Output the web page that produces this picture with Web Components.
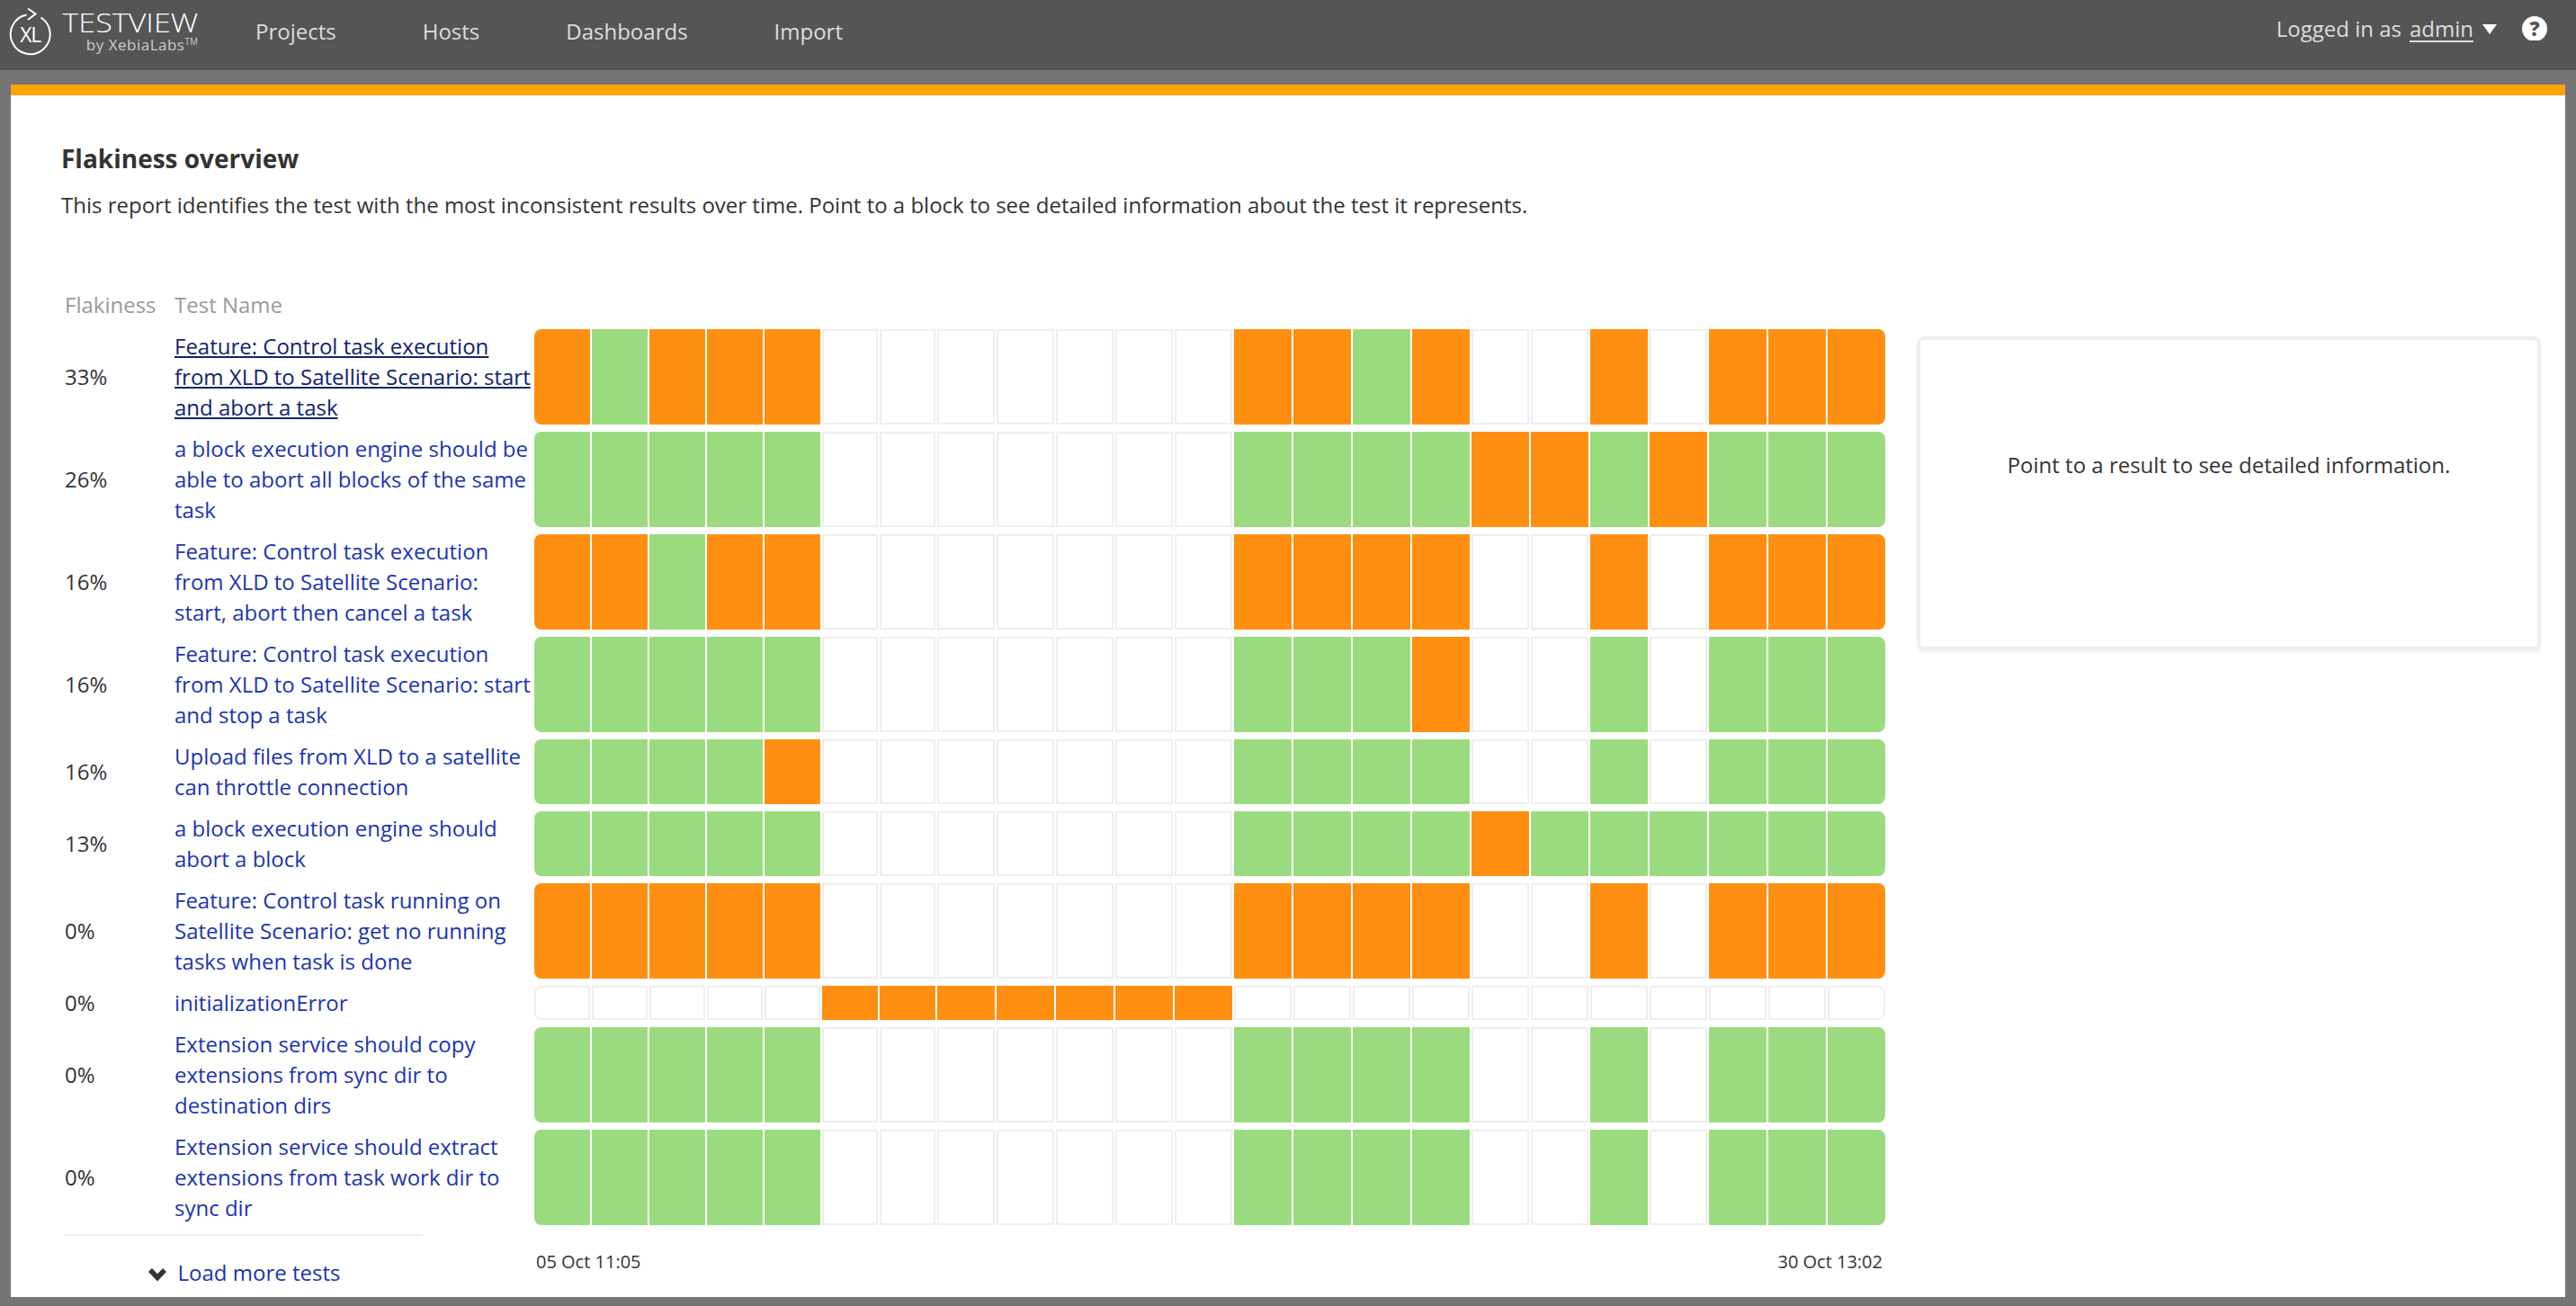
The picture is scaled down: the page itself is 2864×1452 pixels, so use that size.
<!DOCTYPE html>
<html>
<head>
<meta charset="utf-8">
<title>Flakiness overview</title>
<style>
    html, body { margin: 0; padding: 0; }
    body {
        width: 2864px;
        height: 1452px;
        overflow: hidden;
        background: #757575;
        font-family: "Open Sans", "Liberation Sans", sans-serif;
        color: #333;
    }
</style>
</head>
<body>
<app-header></app-header>
<report-page>
    <flaky-table>
        <flaky-row pct="33%" cells="ogooo.......oogo..o.ooo" hover>Feature: Control task execution from XLD to Satellite Scenario: start and abort a task</flaky-row>
        <flaky-row pct="26%" cells="ggggg.......ggggoogoggg">a block execution engine should be able to abort all blocks of the same task</flaky-row>
        <flaky-row pct="16%" cells="oogoo.......oooo..o.ooo">Feature: Control task execution from XLD to Satellite Scenario: start, abort then cancel a task</flaky-row>
        <flaky-row pct="16%" cells="ggggg.......gggo..g.ggg">Feature: Control task execution from XLD to Satellite Scenario: start and stop a task</flaky-row>
        <flaky-row pct="16%" cells="ggggo.......gggg..g.ggg">Upload files from XLD to a satellite can throttle connection</flaky-row>
        <flaky-row pct="13%" cells="ggggg.......ggggogggggg">a block execution engine should abort a block</flaky-row>
        <flaky-row pct="0%" cells="ooooo.......oooo..o.ooo">Feature: Control task running on Satellite Scenario: get no running tasks when task is done</flaky-row>
        <flaky-row pct="0%" cells=".....ooooooo...........">initializationError</flaky-row>
        <flaky-row pct="0%" cells="ggggg.......gggg..g.ggg">Extension service should copy extensions from sync dir to destination dirs</flaky-row>
        <flaky-row pct="0%" cells="ggggg.......gggg..g.ggg">Extension service should extract extensions from task work dir to sync dir</flaky-row>
    </flaky-table>
    <detail-panel slot="side">Point to a result to see detailed information.</detail-panel>
</report-page>

<script>
class AppHeader extends HTMLElement {
    constructor() {
        super();
        this.attachShadow({ mode: "open" });
    }

    connectedCallback() {
        this.shadowRoot.innerHTML = `
            <style>
                :host {
                    display: flex;
                    align-items: center;
                    height: 78px;
                    background: #555;
                    color: #ddd;
                    font-size: 24px;
                }
                svg { display: block; flex: none; }
                .brand {
                    width: 148px;
                    display: flex;
                    flex-direction: column;
                    align-items: flex-end;
                }
                .name {
                    color: #fff;
                    font-size: 29px;
                    font-weight: 300;
                    line-height: 30px;
                    margin-top: -9px;
                    transform: scaleX(1.176);
                    transform-origin: right center;
                }
                .by {
                    font-size: 17px;
                    line-height: 20px;
                    letter-spacing: .5px;
                    color: #ccc;
                }
                .by sup { font-size: 10px; line-height: 0; vertical-align: 6px; letter-spacing: 0; }
                nav {
                    display: flex;
                    gap: 96px;
                    margin-left: 64px;
                    margin-bottom: 10px;
                }
                .user {
                    display: flex;
                    align-items: center;
                    margin-left: auto;
                    margin-right: 32px;
                    margin-bottom: 15px;
                }
                .user u { margin-left: 9px; text-underline-offset: 4px; }
                .caret {
                    width: 0;
                    height: 0;
                    margin: 2px 28px 0 10px;
                    border-left: 8px solid transparent;
                    border-right: 8px solid transparent;
                    border-top: 11px solid #fff;
                }
                .help { display: grid; width: 28px; height: 27px; }
                .help > * { grid-area: 1 / 1; }
                .help span {
                    color: #555;
                    font-size: 22px;
                    font-weight: 800;
                    line-height: 27px;
                    text-align: center;
                }
            </style>
            <svg width="72" height="78" viewBox="0 0 72 78">
                <path d="M45.5 19.5 A22 22 0 1 1 29.5 16.5" fill="none" stroke="#fff" stroke-width="2"/>
                <path d="M31 9.5 L39.5 15.5 L31 22" fill="none" stroke="#fff" stroke-width="2"/>
                <text x="33.5" y="47" text-anchor="middle" fill="#fff" font-size="23" letter-spacing="-1.5" font-family="Open Sans">XL</text>
            </svg>
            <div class="brand">
                <div class="name">TESTVIEW</div>
                <div class="by">by XebiaLabs<sup>TM</sup></div>
            </div>
            <nav>
                <span>Projects</span>
                <span>Hosts</span>
                <span>Dashboards</span>
                <span>Import</span>
            </nav>
            <div class="user">
                <span>Logged in as</span><u>admin</u>
                <div class="caret"></div>
                <div class="help">
                    <svg width="28" height="27" viewBox="0 0 28 27"><circle cx="14" cy="14" r="14" fill="#fff"/></svg>
                    <span>?</span>
                </div>
            </div>
        `;
    }
}

class ReportPage extends HTMLElement {
    constructor() {
        super();
        this.attachShadow({ mode: "open" });
    }

    connectedCallback() {
        this.shadowRoot.innerHTML = `
            <style>
                :host {
                    display: block;
                    box-sizing: border-box;
                    height: 1348px;
                    margin: 16px 12px 0;
                    padding: 53px 27px 0 56px;
                    background: #fff;
                    border-top: 12px solid #ffa500;
                }
                h1 {
                    margin: 0;
                    font-size: 28px;
                    font-weight: 700;
                    line-height: 34px;
                }
                p {
                    margin: 18px 0 0;
                    font-size: 24px;
                    line-height: 34px;
                }
                .body {
                    display: flex;
                    gap: 35px;
                    margin: 77px 0 0 4px;
                }
            </style>
            <h1>Flakiness overview</h1>
            <p>This report identifies the test with the most inconsistent results over time. Point to a block to see detailed information about the test it represents.</p>
            <div class="body">
                <slot></slot>
                <slot name="side"></slot>
            </div>
        `;
    }
}

class FlakyTable extends HTMLElement {
    constructor() {
        super();
        this.attachShadow({ mode: "open" });
    }

    connectedCallback() {
        this.shadowRoot.innerHTML = `
            <style>
                :host {
                    display: block;
                    flex: none;
                    width: 2024px;
                    font-size: 24px;
                }
                .head {
                    display: flex;
                    height: 34px;
                    margin-bottom: 10px;
                    line-height: 34px;
                    color: #999;
                }
                .head span:first-child { width: 122px; }
                .rows { display: flex; flex-direction: column; gap: 8px; }
                .foot {
                    display: flex;
                    justify-content: space-between;
                }
                .more {
                    width: 398px;
                    margin-top: 10px;
                    padding-top: 24px;
                    border-top: 2px solid #eee;
                    display: flex;
                    justify-content: center;
                    align-items: center;
                    gap: 12px;
                    color: #1c34b0;
                    line-height: 34px;
                }
                .more svg { display: block; margin-top: 3px; }
                .dates {
                    display: flex;
                    justify-content: space-between;
                    width: 1497px;
                    margin: 27px 3px 0 0;
                    font-size: 20px;
                    line-height: 28px;
                }
            </style>
            <div class="head"><span>Flakiness</span><span>Test Name</span></div>
            <div class="rows"><slot></slot></div>
            <div class="foot">
                <div class="more">
                    <svg width="22" height="16" viewBox="0 0 22 16"><path d="M3 3 L11 11.5 L19 3" fill="none" stroke="#333" stroke-width="5.5"/></svg>
                    <span>Load more tests</span>
                </div>
                <div class="dates"><span>05 Oct 11:05</span><span>30 Oct 13:02</span></div>
            </div>
        `;
    }
}

class FlakyRow extends HTMLElement {
    constructor() {
        super();
        this.attachShadow({ mode: "open" });
    }

    connectedCallback() {
        const cells = this.getAttribute("cells").split("").map((c) => {
            const kind = c === "o" ? "fail" : c === "g" ? "pass" : "none";
            return `<div class="cell ${kind}"></div>`;
        }).join("");

        this.shadowRoot.innerHTML = `
            <style>
                :host {
                    display: grid;
                    grid-template-columns: 122px 400px 1fr;
                    align-items: center;
                    font-size: 24px;
                    line-height: 34px;
                }
                .name { color: #1c34b0; padding: 2px 4px 2px 0; }
                :host([hover]) .name { color: #10246f; text-decoration: underline; }
                .cells {
                    display: grid;
                    grid-template-columns: repeat(7, 62px) repeat(16, 64px);
                    gap: 2px;
                    align-self: stretch;
                }
                .cell { box-sizing: border-box; }
                .fail { background: #ff8f11; }
                .pass { background: #9bdb7f; }
                .none { border: 2px solid #eee; background: #fff; }
                .cell:first-child { border-radius: 8px 0 0 8px; }
                .cell:last-child { border-radius: 0 8px 8px 0; }
            </style>
            <div class="pct">${this.getAttribute("pct")}</div>
            <div class="name"><slot></slot></div>
            <div class="cells">${cells}</div>
        `;
    }
}

class DetailPanel extends HTMLElement {
    constructor() {
        super();
        this.attachShadow({ mode: "open" });
    }

    connectedCallback() {
        this.shadowRoot.innerHTML = `
            <style>
                :host {
                    display: flex;
                    box-sizing: border-box;
                    justify-content: center;
                    width: 694px;
                    height: 349px;
                    margin-top: 52px;
                    padding-top: 122px;
                    border: 4px solid #eee;
                    border-radius: 8px;
                    box-shadow: 0 3px 2px #f2f2f2;
                    font-size: 24px;
                    line-height: 34px;
                }
            </style>
            <slot></slot>
        `;
    }
}

customElements.define("app-header", AppHeader);
customElements.define("report-page", ReportPage);
customElements.define("flaky-table", FlakyTable);
customElements.define("flaky-row", FlakyRow);
customElements.define("detail-panel", DetailPanel);
</script>
</body>
</html>
